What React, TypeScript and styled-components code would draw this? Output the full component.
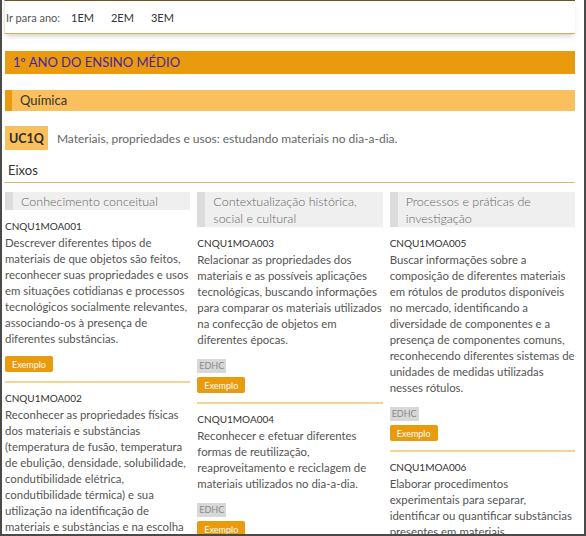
import styled, { createGlobalStyle } from "styled-components";

const GlobalStyle = createGlobalStyle`
    html, body {
        margin: 0;
        padding: 0;
        background: #fff;
    }
    body {
        font-family: Lato, "Open Sans", sans-serif;
    }
`;

type Item = {
    code: string;
    text: string;
    edhc?: boolean;
};

type Axis = {
    title: string;
    items: Item[];
};

const axes: Axis[] = [
    {
        title: "Conhecimento conceitual",
        items: [
            {
                code: "CNQU1MOA001",
                text: "Descrever diferentes tipos de materiais de que objetos são feitos, reconhecer suas propriedades e usos em situações cotidianas e processos tecnológicos socialmente relevantes, associando-os à presença de diferentes substâncias.",
            },
            {
                code: "CNQU1MOA002",
                text: "Reconhecer as propriedades físicas dos materiais e substâncias (temperatura de fusão, temperatura de ebulição, densidade, solubilidade, condutibilidade elétrica, condutibilidade térmica) e sua utilização na identificação de materiais e substâncias e na escolha de materiais para usos específicos.",
            },
        ],
    },
    {
        title: "Contextualização histórica, social e cultural",
        items: [
            {
                code: "CNQU1MOA003",
                text: "Relacionar as propriedades dos materiais e as possíveis aplicações tecnológicas, buscando informações para comparar os materiais utilizados na confecção de objetos em diferentes épocas.",
                edhc: true,
            },
            {
                code: "CNQU1MOA004",
                text: "Reconhecer e efetuar diferentes formas de reutilização, reaproveitamento e reciclagem de materiais utilizados no dia-a-dia.",
                edhc: true,
            },
        ],
    },
    {
        title: "Processos e práticas de investigação",
        items: [
            {
                code: "CNQU1MOA005",
                text: "Buscar informações sobre a composição de diferentes materiais em rótulos de produtos disponíveis no mercado, identificando a diversidade de componentes e a presença de componentes comuns, reconhecendo diferentes sistemas de unidades de medidas utilizadas nesses rótulos.",
                edhc: true,
            },
            {
                code: "CNQU1MOA006",
                text: "Elaborar procedimentos experimentais para separar, identificar ou quantificar substâncias presentes em materiais.",
                edhc: true,
            },
        ],
    },
];

export default function App() {
    return (
        <>
            <GlobalStyle />
            <Frame>
                <Content>
                    <NavBar>
                        <NavLabel>Ir para ano:</NavLabel>
                        <NavLink>1EM</NavLink>
                        <NavLink>2EM</NavLink>
                        <NavLink>3EM</NavLink>
                    </NavBar>

                    <YearTitle>1º ANO DO ENSINO MÉDIO</YearTitle>
                    <SubjectBar>Química</SubjectBar>

                    <UnitRow>
                        <UnitBadge>UC1Q</UnitBadge>
                        <UnitText>Materiais, propriedades e usos: estudando materiais no dia-a-dia.</UnitText>
                    </UnitRow>

                    <AxesTitle>Eixos</AxesTitle>

                    <Columns>
                        {axes.map((axis) => (
                            <Column key={axis.title}>
                                <ColumnHeader>{axis.title}</ColumnHeader>
                                {axis.items.map((item, i) => (
                                    <Objective key={item.code} $first={i === 0}>
                                        <Code>{item.code}</Code>
                                        <Description>{item.text}</Description>
                                        {item.edhc && <Tag>EDHC</Tag>}
                                        <ExampleButton>Exemplo</ExampleButton>
                                    </Objective>
                                ))}
                            </Column>
                        ))}
                    </Columns>
                </Content>
            </Frame>
        </>
    );
}

const Frame = styled.div`
    box-sizing: border-box;
    width: 586px;
    height: 536px;
    overflow: hidden;
    border-left: 2px solid #4a4a4a;
    border-right: 2px solid #4a4a4a;
    border-bottom: 2px solid #4a4a4a;
    padding: 0 9px 0 2px;
`;

const Content = styled.div`
    display: flex;
    flex-direction: column;
`;

const NavBar = styled.nav`
    display: flex;
    align-items: center;
    height: 32px;
    padding-left: 1px;
    border-top: 1px solid #6e5418;
    border-bottom: 1px solid #cfae62;
    border-left: 1px solid #e6e6e6;
    box-shadow: 0 4px 5px -2px rgba(90, 70, 30, 0.25);
    font-size: 11px;
    color: #555;
`;

const NavLabel = styled.span`
    margin-right: 11px;
`;

const NavLink = styled.a`
    color: #333;
    margin-right: 17px;
    cursor: pointer;
`;

const YearTitle = styled.h1`
    margin: 17px 0 0 1px;
    height: 23px;
    line-height: 23px;
    padding-left: 8px;
    background: #e99a0d;
    color: #4a24a3;
    font-size: 13px;
    font-weight: 400;
`;

const SubjectBar = styled.h2`
    margin: 16px 0 0 1px;
    height: 21px;
    line-height: 21px;
    padding-left: 8px;
    background: #fbc05e;
    border-left: 7px solid #e99a0d;
    color: #333;
    font-size: 13px;
    font-weight: 400;
`;

const UnitRow = styled.div`
    display: flex;
    align-items: center;
    gap: 9px;
    margin: 15px 0 0 1px;
`;

const UnitBadge = styled.span`
    display: inline-flex;
    align-items: center;
    height: 24px;
    padding: 0 4px;
    background: #fbc05e;
    color: #2b2b2b;
    font-size: 12.5px;
    font-weight: 700;
`;

const UnitText = styled.span`
    font-size: 12px;
    color: #666;
`;

const AxesTitle = styled.h3`
    margin: 10px 0 0 0;
    padding: 2px 0 4px 4px;
    border-bottom: 1px solid #d9bb6a;
    font-size: 13px;
    font-weight: 400;
    color: #333;
    line-height: 16px;
`;

const Columns = styled.div`
    display: grid;
    grid-template-columns: repeat(3, 1fr);
    column-gap: 7px;
    margin-top: 9px;
    padding-left: 1px;
`;

const Column = styled.div`
    display: flex;
    flex-direction: column;
`;

const ColumnHeader = styled.div`
    background: #efefef;
    border-left: 8px solid #dcdcdc;
    padding: 1px 4px 0 8px;
    font-size: 12.5px;
    line-height: 17px;
    color: #666;
    font-weight: 300;
`;

const Objective = styled.div<{ $first: boolean }>`
    display: flex;
    flex-direction: column;
    align-items: flex-start;
    padding: ${(p) => (p.$first ? "8px 0 9px" : "7px 0 9px")};
    border-top: ${(p) => (p.$first ? "none" : "2px solid #f1d590")};
`;

const Code = styled.div`
    font-size: 10px;
    line-height: 16px;
    color: #333;
`;

const Description = styled.p`
    margin: 1px 0 9px;
    font-size: 11.4px;
    line-height: 16px;
    color: #555;
`;

const Tag = styled.span`
    background: #d8d8d8;
    color: #8a8a8a;
    font-size: 9px;
    line-height: 14px;
    padding: 0 2px;
    margin: 2px 0 4px;
`;

const ExampleButton = styled.button`
    border: none;
    border-radius: 2px;
    background: #e99a0d;
    color: #fff;
    font-family: Lato, sans-serif;
    font-size: 9px;
    height: 16px;
    padding: 0 7px;
    cursor: pointer;
`;
